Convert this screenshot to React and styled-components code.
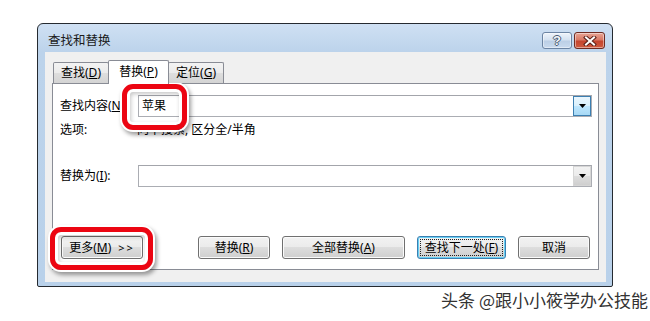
import React from 'react';
import styled, { createGlobalStyle } from 'styled-components';

const Global = createGlobalStyle`
  html, body { margin: 0; padding: 0; background: #fff; }
  body { font-family: "Noto Sans", "Noto Sans CJK SC", sans-serif; }
  u { text-underline-offset: 1px; }
`;

const FONT = `"Noto Sans", "Noto Sans CJK SC", sans-serif`;

const Page = styled.div`
  width: 650px;
  height: 321px;
  box-sizing: border-box;
  padding: 23px 0 0 37px;
  display: flex;
  flex-direction: column;
  overflow: hidden;
`;

const Window = styled.div`
  position: relative;
  width: 576px;
  height: 264px;
  box-sizing: border-box;
  border: 1px solid #252a30;
  border-radius: 6px 6px 2px 2px;
  background: linear-gradient(#cfe0f3, #bcd3eb 28px, #b9d1ea);
  display: flex;
  flex-direction: column;
  padding: 0 6px 4px 7px;
`;

const TitleBar = styled.div`
  height: 28px;
  display: flex;
  align-items: flex-start;
  padding: 0 1px 0 3px;
`;

const Title = styled.div`
  margin-top: 9px;
  font: 12.5px/16px ${FONT};
  color: #1b1b1b;
  flex: 1;
`;

const CapButtons = styled.div`
  margin-top: 8px;
  display: flex;
  gap: 2px;
`;

const CapButton = styled.div`
  box-sizing: border-box;
  width: ${p => p.$w}px;
  height: 17px;
  border-radius: 3px;
  border: 1px solid ${p => (p.$close ? '#6e2b22' : '#6c84a3')};
  background: ${p =>
    p.$close
      ? 'linear-gradient(#e8a595 0%, #d97a66 45%, #c5452f 55%, #cf5a3f 100%)'
      : 'linear-gradient(#eef3fa 0%, #d5e2f1 45%, #bccfe6 55%, #c9daee 100%)'};
  box-shadow: inset 0 0 0 1px rgba(255,255,255,0.45);
  display: flex;
  align-items: center;
  justify-content: center;
`;

const Help = styled.span`
  font: bold 13px/1 "Liberation Sans", sans-serif;
  color: #f5f7fa;
  text-shadow: 1px 0 0 #4a5b72, -1px 0 0 #4a5b72, 0 1px 0 #4a5b72, 0 -1px 0 #4a5b72;
`;

const Client = styled.div`
  flex: 1;
  background: #f0f0f0;
  padding: 8px 7px 12px 7px;
  display: flex;
  flex-direction: column;
`;

const TabStrip = styled.div`
  height: 23px;
  display: flex;
  align-items: flex-end;
  padding-left: 1px;
  position: relative;
  z-index: 1;
`;

const Tab = styled.div`
  box-sizing: border-box;
  width: ${p => p.$w}px;
  height: ${p => (p.$active ? 24 : 21)}px;
  margin-bottom: ${p => (p.$active ? -1 : 0)}px;
  border: 1px solid #898c95;
  border-bottom: none;
  border-radius: 2px 2px 0 0;
  background: ${p =>
    p.$active ? '#fff' : 'linear-gradient(#f3f3f3 0%, #ebebeb 50%, #dedede 51%, #d4d4d4 100%)'};
  margin-left: ${p => (p.$first ? 0 : -1)}px;
  display: flex;
  align-items: ${p => (p.$active ? 'flex-start' : 'center')};
  padding-top: ${p => (p.$active ? 3 : 0)}px;
  justify-content: center;
  font: 12px/16px ${FONT};
  color: #000;
`;

const Panel = styled.div`
  box-sizing: border-box;
  height: 187px;
  border: 1px solid #898c95;
  background: #fff;
  padding: 11px 6px 10px 7px;
  display: flex;
  flex-direction: column;
`;

const FieldRow = styled.div`
  display: grid;
  grid-template-columns: ${p => p.$label}px 1fr;
  align-items: center;
  height: ${p => p.$h}px;
  margin-top: ${p => p.$mt || 0}px;
`;

const Label = styled.div`
  font: 12px/16px ${FONT};
  color: #000;
  white-space: nowrap;
  overflow: hidden;
`;

const Combo = styled.div`
  box-sizing: border-box;
  height: 22px;
  border: 1px solid #abadb3;
  border-top-color: #a3a5ab;
  background: #fff;
  display: flex;
  align-items: stretch;
`;

const ComboText = styled.div`
  flex: 1;
  padding-left: 3px;
  font: 12px/20px ${FONT};
  color: #000;
`;

const DropButton = styled.div`
  box-sizing: border-box;
  width: 18px;
  margin: 0 0 0 0;
  border: 1px solid ${p => (p.$hot ? '#3c7fb1' : '#d6d6d6')};
  background: ${p =>
    p.$hot
      ? 'linear-gradient(#eaf6fd 0%, #d9f0fc 50%, #bee6fd 51%, #a7d9f5 100%)'
      : 'linear-gradient(#f2f2f2 0%, #ebebeb 50%, #dddddd 51%, #cfcfcf 100%)'};
  display: flex;
  align-items: center;
  justify-content: center;
`;

const Options = styled.div`
  font: 12px/16px ${FONT};
  color: #000;
`;

const ButtonRow = styled.div`
  margin-top: auto;
  display: flex;
  align-items: center;
  height: 23px;
  padding: 0 2px 0 1px;
`;

const RightGroup = styled.div`
  margin-left: auto;
  display: flex;
  gap: 12px;
`;

const Btn = styled.div`
  position: relative;
  box-sizing: border-box;
  width: ${p => p.$w}px;
  height: 23px;
  border: 1px solid ${p => (p.$default ? '#3c7fb1' : '#707070')};
  border-radius: 3px;
  background: linear-gradient(#f2f2f2 0%, #ebebeb 49%, #dddddd 50%, #cfcfcf 100%);
  box-shadow: inset 0 0 0 1px ${p => (p.$default ? '#66d0f5' : '#fbfbfb')};
  display: flex;
  align-items: center;
  justify-content: center;
  font: 12px/16px ${FONT};
  color: #000;
  white-space: nowrap;
  &::after {
    content: '';
    display: ${p => (p.$default ? 'block' : 'none')};
    position: absolute;
    inset: 2px;
    border: 1px dotted #222;
  }
`;

const Arrows = styled.span`
  margin-left: 7px;
  letter-spacing: 2px;
  font-size: 11px;
`;

const Highlight = styled.div`
  position: absolute;
  left: ${p => p.$x}px;
  top: ${p => p.$y}px;
  width: ${p => p.$w}px;
  height: ${p => p.$h}px;
  box-sizing: border-box;
  border: 5px solid #ec0512;
  border-radius: 11px;
  box-shadow:
    0 0 0 2px #fff,
    2px 3px 4px 2px rgba(0, 0, 0, 0.38),
    inset 0 0 0 3px #fff,
    inset 1px 2px 4px 3px rgba(0, 0, 0, 0.22);
  pointer-events: none;
`;

const Watermark = styled.div`
  align-self: flex-end;
  margin: 3px 2px 0 0;
  font: 17px/20px "Noto Sans CJK SC", sans-serif;
  color: #333;
  white-space: nowrap;
`;

const DownArrow = () => (
  <svg width="7" height="4" viewBox="0 0 7 4">
    <polygon points="0,0 7,0 3.5,4" fill="#000" />
  </svg>
);

const CloseX = () => (
  <svg width="14" height="10" viewBox="0 0 14 10">
    <path d="M3 1.5 L11 8.5 M11 1.5 L3 8.5" stroke="#5a2018" strokeWidth="4" strokeLinecap="square" />
    <path d="M3 1.5 L11 8.5 M11 1.5 L3 8.5" stroke="#fff" strokeWidth="2" strokeLinecap="square" />
  </svg>
);

export default function App() {
  return (
    <>
      <Global />
      <Page>
        <Window>
          <TitleBar>
            <Title>查找和替换</Title>
            <CapButtons>
              <CapButton $w={30}><Help>?</Help></CapButton>
              <CapButton $w={31} $close><CloseX /></CapButton>
            </CapButtons>
          </TitleBar>
          <Client>
            <TabStrip>
              <Tab $w={56} $first>查找(<u>D</u>)</Tab>
              <Tab $w={61} $active>替换(<u>P</u>)</Tab>
              <Tab $w={56}>定位(<u>G</u>)</Tab>
            </TabStrip>
            <Panel>
              <FieldRow $label={78} $h={22}>
                <Label>查找内容(<u>N</u>):</Label>
                <Combo>
                  <ComboText>苹果</ComboText>
                  <DropButton $hot><DownArrow /></DropButton>
                </Combo>
              </FieldRow>
              <FieldRow $label={77} $h={16} $mt={5}>
                <Label>选项:</Label>
                <Options>向下搜索, 区分全/半角</Options>
              </FieldRow>
              <FieldRow $label={78} $h={22} $mt={27}>
                <Label>替换为(<u>I</u>):</Label>
                <Combo>
                  <ComboText />
                  <DropButton><DownArrow /></DropButton>
                </Combo>
              </FieldRow>
              <ButtonRow>
                <Btn $w={82}>更多(<u>M</u>)<Arrows>&gt;&gt;</Arrows></Btn>
                <RightGroup>
                  <Btn $w={72}>替换(<u>R</u>)</Btn>
                  <Btn $w={123}>全部替换(<u>A</u>)</Btn>
                  <Btn $w={89} $default>查找下一处(<u>F</u>)</Btn>
                  <Btn $w={72}>取消</Btn>
                </RightGroup>
              </ButtonRow>
            </Panel>
          </Client>
          <Highlight $x={84} $y={60} $w={65} $h={46} />
          <Highlight $x={12} $y={203} $w={103} $h={43} />
        </Window>
        <Watermark>头条 @跟小小筱学办公技能</Watermark>
      </Page>
    </>
  );
}
